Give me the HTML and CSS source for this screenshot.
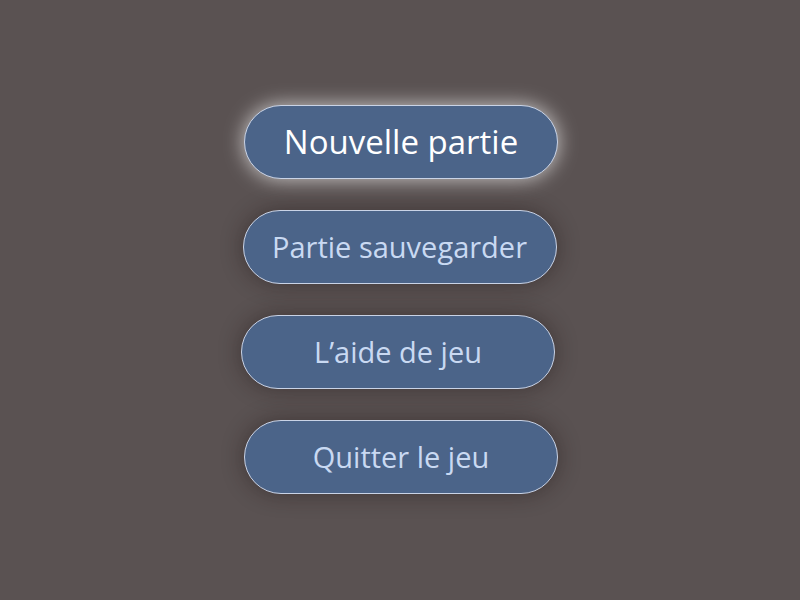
FILE: index.html
```html
<!DOCTYPE html>
<html lang="fr">
<head>
<meta charset="utf-8">
<title>Menu</title>
<link rel="stylesheet" href="styles.css">
</head>
<body>
<main class="menu">
  <button class="btn btn-active btn-a">Nouvelle partie</button>
  <button class="btn btn-b">Partie sauvegarder</button>
  <button class="btn btn-c">L’aide de jeu</button>
  <button class="btn btn-d">Quitter le jeu</button>
</main>
</body>
</html>
```
FILE: styles.css
```css
html, body {
  margin: 0;
  padding: 0;
  height: 100%;
}
body {
  background: #5a5252;
  font-family: "Open Sans", "DejaVu Sans", sans-serif;
}
.menu {
  display: flex;
  flex-direction: column;
  align-items: center;
  gap: 31px;
  padding-top: 105px;
}
.btn {
  box-sizing: border-box;
  width: 314px;
  height: 74px;
  border-radius: 37px;
  border: 1px solid #c9d3e6;
  background: #4b6489;
  color: #c9d9f2;
  font-family: inherit;
  font-size: 29px;
  line-height: 1;
  box-shadow: 0 0 22px rgba(30, 20, 20, 0.45);
  padding: 0 0 2px;
}
.btn-active {
  color: #ffffff;
  font-size: 33px;
  box-shadow: 0 0 20px rgba(255, 255, 255, 0.7);
}
.btn-a { margin-left: 2px; }
.btn-b { margin-left: -1px; }
.btn-c { margin-left: -4px; }
.btn-d { margin-left: 2px; }
```
